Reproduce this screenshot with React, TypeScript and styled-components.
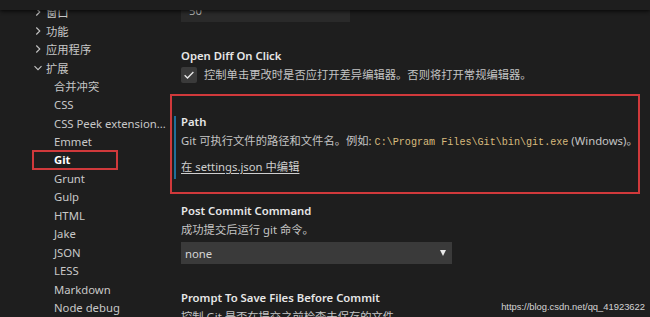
import styled, { createGlobalStyle } from 'styled-components';

const GlobalStyle = createGlobalStyle`
  html, body {
    margin: 0;
    padding: 0;
    background: #1e1e1e;
  }
`;

const treeItems = [
  { label: '窗口', level: 0, chevron: 'right' },
  { label: '功能', level: 0, chevron: 'right' },
  { label: '应用程序', level: 0, chevron: 'right' },
  { label: '扩展', level: 0, chevron: 'down' },
  { label: '合并冲突', level: 1 },
  { label: 'CSS', level: 1 },
  { label: 'CSS Peek extension...', level: 1 },
  { label: 'Emmet', level: 1 },
  { label: 'Git', level: 1, active: true },
  { label: 'Grunt', level: 1 },
  { label: 'Gulp', level: 1 },
  { label: 'HTML', level: 1 },
  { label: 'Jake', level: 1 },
  { label: 'JSON', level: 1 },
  { label: 'LESS', level: 1 },
  { label: 'Markdown', level: 1 },
  { label: 'Node debug', level: 1 },
];

function Chevron({ dir }: { dir: string }) {
  return (
    <ChevronIcon viewBox='0 0 10 10'>
      {dir === 'down' ? (
        <path d='M1.5 3.2 L5 6.7 L8.5 3.2' />
      ) : (
        <path d='M3.3 1.5 L6.8 5 L3.3 8.5' />
      )}
    </ChevronIcon>
  );
}

export default function App() {
  return (
    <Page>
      <GlobalStyle />
      <HeaderShade />
      <Sidebar>
        {treeItems.map((item) => (
          <TreeRow key={item.label} $level={item.level}>
            {item.chevron ? <Chevron dir={item.chevron} /> : null}
            <TreeLabel $active={!!item.active}>{item.label}</TreeLabel>
          </TreeRow>
        ))}
      </Sidebar>
      <Content>
        <NumberInput>50</NumberInput>

        <Setting $gap={24}>
          <Title>Open Diff On Click</Title>
          <CheckRow>
            <CheckBox>
              <svg viewBox='0 0 16 16' width='14' height='14'>
                <path d='M3 8.3 L6.3 11.5 L13 4.5' fill='none' stroke='#e8e8e8' strokeWidth='1.5' />
              </svg>
            </CheckBox>
            <Description>控制单击更改时是否应打开差异编辑器。否则将打开常规编辑器。</Description>
          </CheckRow>
        </Setting>

        <Highlight>
          <FocusedSetting>
            <Title>Path</Title>
            <Description>
              Git 可执行文件的路径和文件名。例如: <Code>C:\Program Files\Git\bin\git.exe</Code> (Windows)。
            </Description>
            <EditLink>在 settings.json 中编辑</EditLink>
          </FocusedSetting>
        </Highlight>

        <Setting $gap={7}>
          <Title>Post Commit Command</Title>
          <Description>成功提交后运行 git 命令。</Description>
          <Select>
            <span>none</span>
            <Arrow />
          </Select>
        </Setting>

        <Setting $gap={24}>
          <Title>Prompt To Save Files Before Commit</Title>
          <Description>控制 Git 是否在提交之前检查未保存的文件。</Description>
        </Setting>
      </Content>
      <Watermark>https://blog.csdn.net/qq_41923622</Watermark>
    </Page>
  );
}

const Page = styled.div`
  position: relative;
  width: 650px;
  height: 317px;
  overflow: hidden;
  display: flex;
  background: #1e1e1e;
  color: #cccccc;
  font-family: 'Segoe UI', 'Noto Sans', 'Noto Sans CJK SC', sans-serif;
  font-size: 11.3px;
`;

const HeaderShade = styled.div`
  position: absolute;
  top: 0;
  left: 0;
  right: 0;
  height: 10px;
  background: #1e1e1e;
  box-shadow: 0 1px 4px rgba(0, 0, 0, 0.85);
  z-index: 2;
`;

const Sidebar = styled.div`
  width: 170px;
  flex-shrink: 0;
  padding-top: 3px;
  display: flex;
  flex-direction: column;
`;

const TreeRow = styled.div<{ $level: number }>`
  height: 18.6px;
  display: flex;
  align-items: center;
  padding-left: ${(p) => (p.$level === 0 ? 33 : 54)}px;
  gap: 3px;
`;

const ChevronIcon = styled.svg`
  width: 10px;
  height: 10px;
  fill: none;
  stroke: #c5c5c5;
  stroke-width: 1.1;
`;

const TreeLabel = styled.span<{ $active: boolean }>`
  color: ${(p) => (p.$active ? '#ffffff' : '#c8c8c8')};
  font-weight: ${(p) => (p.$active ? 700 : 400)};
  white-space: nowrap;
  ${(p) =>
    p.$active &&
    `
    outline: 2px solid #d0393b;
    margin-left: -20px;
    padding: 0 46px 0 20px;
    line-height: 16px;
  `}
`;

const Content = styled.div`
  flex: 1;
  display: flex;
  flex-direction: column;
  padding-right: 12px;
`;

const NumberInput = styled.div`
  margin-left: 11px;
  width: 161px;
  height: 22px;
  padding-left: 8px;
  background: #2a2a2a;
  line-height: 22px;
  color: #b8b8b8;
`;

const Setting = styled.div<{ $gap: number }>`
  margin-top: ${(p) => p.$gap}px;
  padding-left: 11px;
  display: flex;
  flex-direction: column;
`;

const Title = styled.div`
  line-height: 19px;
  font-weight: 600;
  color: #e7e7e7;
`;

const Description = styled.div`
  line-height: 19px;
  color: #c4c4c4;
  white-space: nowrap;
`;

const CheckRow = styled.div`
  display: flex;
  align-items: center;
  gap: 7px;
`;

const CheckBox = styled.div`
  width: 16px;
  height: 16px;
  box-sizing: border-box;
  background: #3a3a3a;
  border-radius: 2px;
  display: flex;
  align-items: center;
  justify-content: center;
`;

const Highlight = styled.div`
  margin-top: 10px;
  border: 2px solid #d0393b;
  padding: 16px 0;
`;

const FocusedSetting = styled.div`
  position: relative;
  padding-left: 9px;
  display: flex;
  flex-direction: column;

  &::before {
    content: '';
    position: absolute;
    left: 2px;
    top: 4px;
    bottom: -3px;
    width: 2px;
    background: #1f6f9a;
  }
`;

const Code = styled.span`
  font-family: 'Liberation Mono', 'DejaVu Sans Mono', monospace;
  font-size: 10.1px;
  color: #d7ba7d;
`;

const EditLink = styled.div`
  margin-top: 5px;
  line-height: 19px;
  color: #cfcfcf;
  text-decoration: underline;
  text-underline-offset: 2px;
  align-self: flex-start;
`;

const Select = styled.div`
  margin-top: 3px;
  width: 271px;
  height: 22px;
  box-sizing: border-box;
  padding: 0 6px 0 4px;
  background: #3a3a3a;
  display: flex;
  align-items: center;
  justify-content: space-between;
  color: #d4d4d4;
`;

const Arrow = styled.span`
  width: 0;
  height: 0;
  border-left: 3.5px solid transparent;
  border-right: 3.5px solid transparent;
  border-top: 6px solid #e8e8e8;
`;

const Watermark = styled.div`
  position: absolute;
  right: 5px;
  bottom: 5px;
  font-family: 'Liberation Sans', Arial, sans-serif;
  font-size: 9.4px;
  color: rgba(255, 255, 255, 0.82);
  z-index: 3;
`;
